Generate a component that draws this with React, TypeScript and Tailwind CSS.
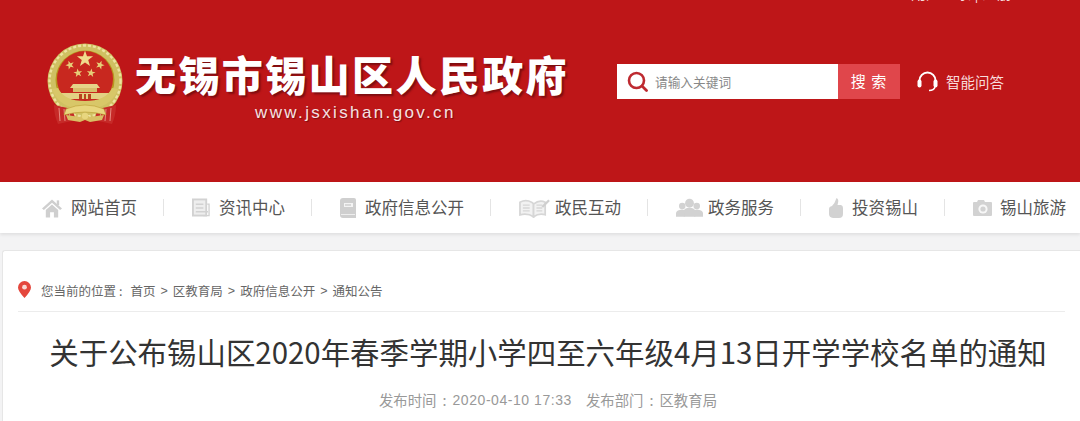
import type { ReactNode } from 'react'

function starPoints(cx: number, cy: number, r: number, rotate = 0): string {
  const pts: string[] = []
  for (let i = 0; i < 10; i++) {
    const rad = i % 2 === 0 ? r : r * 0.4
    const a = ((-90 + rotate + i * 36) * Math.PI) / 180
    pts.push(`${(cx + rad * Math.cos(a)).toFixed(2)},${(cy + rad * Math.sin(a)).toFixed(2)}`)
  }
  return pts.join(' ')
}

function Emblem() {
  return (
    <svg width="78" height="82" viewBox="0 0 78 82" className="shrink-0">
      {/* wheat ring */}
      <circle cx="39" cy="38" r="37.5" fill="#cfc062" />
      <circle cx="39" cy="38" r="35.5" fill="none" stroke="#eee2a0" strokeWidth="2.4" strokeDasharray="3 2" />
      <circle cx="39" cy="37" r="29.5" fill="#b9951f" />
      <circle cx="39" cy="36" r="28" fill="#c8281f" />
      {/* stars */}
      <polygon points={starPoints(39, 16, 8.5)} fill="#f0dc8c" />
      <polygon points={starPoints(24, 22, 4.6, -20)} fill="#e6cf78" />
      <polygon points={starPoints(54, 22, 4.6, 20)} fill="#e6cf78" />
      <polygon points={starPoints(32, 30, 4.6, -8)} fill="#e6cf78" />
      <polygon points={starPoints(45, 30, 4.6, 8)} fill="#e6cf78" />
      {/* gate */}
      <path d="M27 41 H51 L54 45 H24Z" fill="#e6d488" />
      <rect x="27" y="45" width="24" height="4" fill="#d8bf6c" />
      <path d="M15 50 H63 L66 56 H12Z" fill="#e3d184" />
      <path d="M33 51 h3 v5 h-3z M42 51 h3 v5 h-3z M38 51 h2 v5 h-2z" fill="#b8431f" />
      {/* wheat bottom */}
      <path d="M6 46 Q13 66 39 66 Q65 66 72 46 L66 45 Q60 58 39 58 Q18 58 12 45Z" fill="#d8c768" />
      {/* ribbons */}
      <path d="M8 62 L26 66 L30 77 L12 81 Q8 72 8 62Z" fill="#c62a28" />
      <path d="M70 62 L52 66 L48 77 L66 81 Q70 72 70 62Z" fill="#c62a28" />
      <path d="M13 65 L14 78 M18 66 L19 78 M23 67 L24 76 M65 65 L64 78 M60 66 L59 78 M55 67 L54 76" stroke="#e88a80" strokeWidth="1" />
      <path d="M20 66 Q39 58 58 66 L60 72 Q39 66 18 72Z" fill="#e8d67e" stroke="#b99a30" strokeWidth="0.6" />
      <path d="M20 72 L34 74 L39 71 L44 74 L58 72 L56 77 L44 79 L39 77 L34 79 L22 77Z" fill="#d8c064" />
      <circle cx="39" cy="73" r="3.2" fill="#e8d67e" />
    </svg>
  )
}

function HomeIcon() {
  return (
    <svg width="20" height="20" viewBox="0 0 21 20" fill="#cfcfcf">
      <path d="M10.5 1 L21 10.5 L19 12 L10.5 4.5 L2 12 L0 10.5Z" />
      <path d="M4 12 L10.5 6.3 L17 12 V20 H12.5 V14.5 H8.5 V20 H4Z" />
      <rect x="15.5" y="2" width="2.5" height="5" />
    </svg>
  )
}

function DocIcon() {
  return (
    <svg width="18" height="19" viewBox="0 0 19 19" fill="none" stroke="#d2d2d2">
      <rect x="1" y="1" width="14" height="17" strokeWidth="2" fill="#eeeeee" />
      <path d="M4 6 H12 M4 10 H12 M4 14 H17" strokeWidth="1.6" />
      <path d="M16 6 H18 V18 H12" strokeWidth="1.4" />
    </svg>
  )
}

function BookIcon() {
  return (
    <svg width="16" height="20" viewBox="0 0 16 20">
      <path d="M3 0 H14 Q16 0 16 2 V20 H3 Q0 20 0 17 V3 Q0 0 3 0Z" fill="#cfcfcf" />
      <path d="M4 5 H13 V9 H4Z" fill="#f4f4f4" />
      <path d="M5 7 H11" stroke="#bdbdbd" strokeWidth="1" />
      <path d="M1 16.5 H15" stroke="#eeeeee" strokeWidth="1" />
    </svg>
  )
}

function OpenBookIcon() {
  return (
    <svg width="32" height="20" viewBox="0 0 33 20" fill="none" stroke="#d6d6d6">
      <path d="M1 4 Q7 1 13 4 Q15 5 15 6 V19 Q9 15 1 17Z" strokeWidth="1.8" fill="#f2f2f2" />
      <path d="M27 4 Q21 1 15 6 V19 Q21 15 27 17Z" strokeWidth="1.8" fill="#f2f2f2" />
      <path d="M4 7 H11 M4 10 H11 M4 13 H11 M18 7 H24 M18 10 H24 M18 13 H24" strokeWidth="1.3" />
      <path d="M24 9 L31 2" stroke="#cfcfcf" strokeWidth="2.4" />
    </svg>
  )
}

function PeopleIcon() {
  return (
    <svg width="27" height="19" viewBox="0 0 28 19" fill="#d2d2d2">
      <circle cx="14" cy="5" r="4.6" />
      <path d="M8 19 V13 Q9 10 14 9.5 Q19 10 20 13 V19Z" />
      <circle cx="6.5" cy="8" r="3.4" />
      <path d="M0 19 V15 Q1 12 6 11.5 L9 12 V19Z" />
      <circle cx="21.5" cy="8" r="3.4" />
      <path d="M28 19 V15 Q27 12 22 11.5 L19 12 V19Z" />
    </svg>
  )
}

function ThumbIcon() {
  return (
    <svg width="14" height="20" viewBox="0 0 14 20" fill="#d2d2d2">
      <path d="M7.5 0 Q10 1 9 5 L8.5 7 H12 Q14 7.5 14 10 V16 Q14 20 10 20 H4 Q0 19.5 0 16 V11 Q0 8.5 3 8 Q6 5 7.5 0Z" />
    </svg>
  )
}

function CameraIcon() {
  return (
    <svg width="19" height="16" viewBox="0 0 19 16">
      <path d="M1 2 H4 L5 0 H11 L12 2 H18 Q19 2 19 3 V15 Q19 16 18 16 H1 Q0 16 0 15 V3 Q0 2 1 2Z" fill="#d2d2d2" />
      <circle cx="10" cy="9" r="4.6" fill="#f7f7f7" />
      <circle cx="10" cy="9" r="2.6" fill="#d2d2d2" />
    </svg>
  )
}

function SearchIcon() {
  return (
    <svg width="21" height="21" viewBox="0 0 21 21" fill="none" stroke="#be2a30">
      <circle cx="9.5" cy="9.5" r="7.5" strokeWidth="2.6" />
      <path d="M15 15 L19.5 19.5" strokeWidth="2.8" strokeLinecap="round" />
    </svg>
  )
}

function HeadsetIcon() {
  return (
    <svg width="21" height="21" viewBox="0 0 21 21" fill="none">
      <path d="M2.5 11 V9.5 A8 8 0 0 1 18.5 9.5 V11" stroke="#fff" strokeWidth="2" />
      <rect x="0.5" y="8.5" width="4" height="8" rx="2" fill="#fff" />
      <rect x="16.5" y="8.5" width="4" height="8" rx="2" fill="#fff" />
      <path d="M18 16 Q17 19.5 12 19.5" stroke="#fff" strokeWidth="1.5" />
    </svg>
  )
}

function PinIcon() {
  return (
    <svg width="13" height="17" viewBox="0 0 13 17" className="mb-[2px] shrink-0">
      <path d="M6.5 0 A6.5 6.5 0 0 1 13 6.5 Q13 10 6.5 17 Q0 10 0 6.5 A6.5 6.5 0 0 1 6.5 0Z" fill="#e4473d" />
      <circle cx="6.5" cy="6.2" r="2.4" fill="#f8d9d4" />
    </svg>
  )
}

const navItems: { label: string; icon: ReactNode; iconClass: string }[] = [
  { label: '网站首页', icon: <HomeIcon />, iconClass: 'mr-[9px]' },
  { label: '资讯中心', icon: <DocIcon />, iconClass: 'mr-[9px]' },
  { label: '政府信息公开', icon: <BookIcon />, iconClass: 'mr-[9px]' },
  { label: '政民互动', icon: <OpenBookIcon />, iconClass: 'mr-[4px]' },
  { label: '政务服务', icon: <PeopleIcon />, iconClass: 'mr-[5px]' },
  { label: '投资锡山', icon: <ThumbIcon />, iconClass: 'mr-[9px]' },
  { label: '锡山旅游', icon: <CameraIcon />, iconClass: 'mr-[8px]' },
]

const crumbs = ['首页', '区教育局', '政府信息公开', '通知公告']

export default function App() {
  return (
    <div className="h-[421px] w-[1080px] overflow-hidden bg-[#f3f3f4] font-['Noto_Sans_CJK_SC','Liberation_Sans',sans-serif]">
      <header className="flex h-[182px] flex-col overflow-hidden bg-[#be1618]">
        <div className="-mt-[16px] mr-[68px] h-[18px] self-end text-[15px] leading-[18px] text-[#f6dcdc]">
          用户登录 | 注册
        </div>
        <div className="mt-[41px] flex items-start pl-[46px]">
          <Emblem />
          <div className="ml-[11px] w-[482px] pt-[6px]">
            <div className="whitespace-nowrap text-[41px] leading-[48px] font-black tracking-[2.4px] text-white [text-shadow:2px_2px_2px_#7d0d10]">
              无锡市锡山区人民政府
            </div>
            <div className="mt-[6px] pl-[120px] font-['Liberation_Sans',sans-serif] text-[17px] leading-[20px] tracking-[2.38px] whitespace-nowrap text-[#f6e2e2] [text-shadow:1px_1px_1px_#7d0d10]">
              www.jsxishan.gov.cn
            </div>
          </div>
          <div className="mt-[21px] flex h-[35px] w-[283px] items-stretch">
            <div className="flex flex-1 items-center gap-[7px] bg-white pl-[10px] text-[12.7px] text-[#888888]">
              <SearchIcon />
              <span>请输入关键词</span>
            </div>
            <div className="flex w-[62px] items-center justify-center bg-[#e0464b] text-[15px] tracking-[1px] text-white">
              搜 索
            </div>
          </div>
          <div className="mt-[21px] ml-[17px] flex h-[35px] items-center gap-[8px] text-[14.5px] text-[#f8dcdc]">
            <HeadsetIcon />
            <span>智能问答</span>
          </div>
        </div>
      </header>

      <nav className="flex h-[51px] items-center bg-white pl-[42px] whitespace-nowrap text-[16.5px] text-[#555555] shadow-[0_2px_3px_rgba(0,0,0,0.08)]">
        {navItems.map((item, i) => (
          <div key={item.label} className="flex items-center">
            {i > 0 && <span className="mr-[28px] ml-[26px] h-[17px] w-px bg-[#e4e4e4]" />}
            <span className={`flex items-center ${item.iconClass}`}>{item.icon}</span>
            <span>{item.label}</span>
          </div>
        ))}
      </nav>

      <main className="mt-[17px] ml-[2px] h-[200px] rounded-tl-[3px] border-t border-l border-[#e6e6e6] bg-white">
        <div className="mx-[15px] flex h-[61px] items-end border-b border-[#ececec] pb-[11px] text-[12.5px] leading-[18px] whitespace-nowrap text-[#666666]">
          <PinIcon />
          <span className="ml-[10px]">您当前的位置</span>
          <span className="mr-[8px] ml-[3px]">:</span>
          {crumbs.map((c, i) => (
            <span key={c} className="flex">
              {i > 0 && <span className="mx-[5px] font-['Liberation_Sans',sans-serif]">&gt;</span>}
              <span>{c}</span>
            </span>
          ))}
        </div>
        <h1 className="mt-[17px] pl-[13px] text-center text-[29.45px] leading-[44px] font-normal whitespace-nowrap text-[#333333]">
          关于公布锡山区2020年春季学期小学四至六年级4月13日开学学校名单的通知
        </h1>
        <div className="mt-[17px] flex justify-center gap-[14px] pl-[13px] text-[14.4px] leading-[20px] whitespace-nowrap text-[#999999]">
          <span className="flex">
            <span>发布时间</span>
            <span className="mx-[6px]">:</span>
            <span className="font-['Liberation_Sans',sans-serif] text-[14px] tracking-[0.55px]">2020-04-10 17:33</span>
          </span>
          <span className="flex">
            <span>发布部门</span>
            <span className="mx-[6px]">:</span>
            <span>区教育局</span>
          </span>
        </div>
      </main>
    </div>
  )
}
